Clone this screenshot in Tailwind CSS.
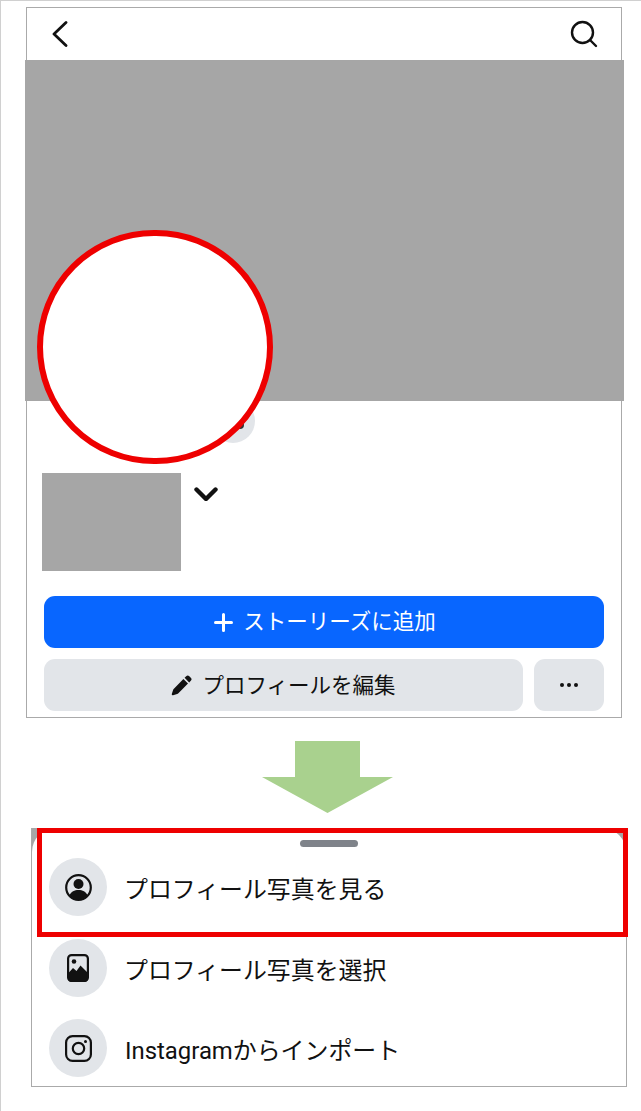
<!DOCTYPE html>
<html lang="ja">
<head>
    <meta charset="UTF-8">
    <title>プロフィール写真を見る</title>
    <script src="https://cdn.jsdelivr.net/npm/@tailwindcss/browser@4"></script>
</head>
<body class="bg-white">
<div class="relative w-[641px] h-[1111px] overflow-hidden border-l border-t border-[#d0d0d0] font-['Roboto','Noto_Sans_CJK_JP',sans-serif] text-[#111]">

    <!-- Profile screen -->
    <section class="relative ml-[25px] mt-[6px] w-[596px] h-[711px] border border-[#aaaaaa] bg-white">
        <header class="flex h-[52px] items-center justify-between pl-[25px] pr-[23px]">
            <svg class="w-[16px] h-[26px]" viewBox="0 0 16 26" fill="none" stroke="#111" stroke-width="2.800" stroke-linecap="round" stroke-linejoin="round"><path d="M14 1.500 2 13l12 11.500"/></svg>
            <svg class="w-[28px] h-[28px]" viewBox="0 0 28 28" fill="none" stroke="#111" stroke-width="2.400" stroke-linecap="round"><circle cx="12.500" cy="12.500" r="10.500"/><path d="m20 20 6 6"/></svg>
        </header>

        <!-- Cover -->
        <div class="-ml-[2px] w-[599px] h-[341px] bg-[#a6a6a6]"></div>

        <!-- Name -->
        <div class="mt-[72px] ml-[15px] flex items-start">
            <div class="w-[139px] h-[98px] bg-[#a6a6a6]"></div>
            <svg class="ml-[13px] mt-[14px] w-[24px] h-[14px]" viewBox="0 0 24 14" fill="none" stroke="#111" stroke-width="4.400" stroke-linecap="round" stroke-linejoin="round"><path d="m2.500 2.500 9.500 9.500 9.500-9.500"/></svg>
        </div>

        <!-- Buttons -->
        <div class="mt-[25px] ml-[17px] w-[560px] flex flex-col gap-[11px]">
            <button class="flex h-[52px] items-center justify-center gap-[10px] rounded-[11px] bg-[#0866ff] pl-[2px] text-[21.500px] text-white">
                <svg class="w-[19px] h-[19px]" viewBox="0 0 19 19" fill="none" stroke="#fff" stroke-width="3" stroke-linecap="round"><path d="M9.500 1.500v16M1.500 9.500h16"/></svg>
                <span>ストーリーズに追加</span>
            </button>
            <div class="flex gap-[11px]">
                <button class="flex h-[52px] w-[479px] items-center justify-center gap-[10px] rounded-[11px] bg-[#e2e5e9] text-[21.500px]">
                    <svg class="w-[21px] h-[21px]" viewBox="0 0 21 21" fill="#111"><path d="M15.200 1.200a2.200 2.200 0 0 1 3.100 0l1.500 1.500a2.200 2.200 0 0 1 0 3.100l-1.600 1.600-4.600-4.600zM12.400 4l4.600 4.600-9.600 9.600c-.4.4-.8.6-1.300.8l-4 1.300c-.8.2-1.500-.5-1.300-1.300l1.300-4c.2-.5.4-.9.8-1.300z"/></svg>
                    <span class="pt-[2px]">プロフィールを編集</span>
                </button>
                <button class="flex h-[52px] w-[70px] items-center justify-center gap-[3px] rounded-[11px] bg-[#e2e5e9]">
                    <span class="w-[4px] h-[4px] rounded-full bg-[#111]"></span>
                    <span class="w-[4px] h-[4px] rounded-full bg-[#111]"></span>
                    <span class="w-[4px] h-[4px] rounded-full bg-[#111]"></span>
                </button>
            </div>
        </div>

        <!-- Camera button, under the red circle -->
        <div class="absolute left-[184px] top-[391px] w-[44px] h-[44px] rounded-full bg-[#e2e5e9]">
            <span class="absolute left-[25px] top-[22px] w-[8px] h-[8px] rounded-full bg-[#333]"></span>
        </div>
    </section>

    <!-- Avatar highlight -->
    <div class="absolute left-[36px] top-[229px] w-[236px] h-[234px] rounded-full border-[6px] border-[#ee0000] bg-white"></div>

    <!-- Arrow -->
    <svg class="ml-[261px] mt-[23px] block w-[131px] h-[72px]" viewBox="0 0 131 72" fill="#a9d18e"><path d="M33 0h65v36h33L65.500 72 0 36h33z"/></svg>

    <!-- Bottom sheet -->
    <section class="ml-[30px] mt-[15px] w-[596px] h-[259px] border-x border-b border-[#aaaaaa] bg-linear-to-b from-[#a6a6a6] from-[30px] to-white to-[30px]">
        <div class="h-full rounded-t-[24px] bg-white pl-[17px] pt-[12px]">
            <div class="ml-[251px] w-[58px] h-[7px] rounded-full bg-[#7f838a]"></div>
            <ul class="mt-[11px] flex flex-col gap-[22.500px] text-[23.900px]">
                <li class="flex items-center gap-[18px]">
                    <span class="flex w-[58px] h-[58px] items-center justify-center rounded-full bg-[#e2e5e9]">
                        <svg class="w-[27px] h-[27px]" viewBox="0 0 27 27"><circle cx="13.500" cy="13.500" r="12.300" fill="none" stroke="#111" stroke-width="2.200"/><circle cx="13.500" cy="10" r="5" fill="#111"/><path d="M4.500 21.500c1.500-4 5-5.500 9-5.500s7.500 1.500 9 5.500a12.300 12.300 0 0 1-18 0z" fill="#111"/></svg>
                    </span>
                    <span class="pt-[8px] -ml-[1px]">プロフィール写真を見る</span>
                </li>
                <li class="flex items-center gap-[18px]">
                    <span class="flex w-[58px] h-[58px] items-center justify-center rounded-full bg-[#e2e5e9]">
                        <svg class="w-[22px] h-[28px]" viewBox="0 0 22 28"><rect x="1.100" y="1.100" width="19.800" height="25.800" rx="3.500" fill="none" stroke="#111" stroke-width="2.200"/><circle cx="7" cy="7.500" r="2.300" fill="#111"/><path d="M1 19.500 6 14l3.500 3 4-5.500L21 19v5a4 4 0 0 1-4 4H5a4 4 0 0 1-4-4z" fill="#111"/></svg>
                    </span>
                    <span class="pt-[8px] -ml-[1px]">プロフィール写真を選択</span>
                </li>
                <li class="flex items-center gap-[18px]">
                    <span class="flex w-[58px] h-[58px] items-center justify-center rounded-full bg-[#e2e5e9]">
                        <svg class="w-[27px] h-[27px]" viewBox="0 0 27 27" fill="none" stroke="#111" stroke-width="2.200"><rect x="1.100" y="1.100" width="24.800" height="24.800" rx="6.500"/><circle cx="13.500" cy="13.500" r="5.700"/><circle cx="20.500" cy="6.500" r="1.500" fill="#111" stroke="none"/></svg>
                    </span>
                    <span class="pt-[8px]">Instagramからインポート</span>
                </li>
            </ul>
        </div>
    </section>

    <!-- Row highlight -->
    <div class="absolute left-[36px] top-[827px] w-[591px] h-[109px] border-[5px] border-[#ee0000]"></div>
</div>
</body>
</html>
